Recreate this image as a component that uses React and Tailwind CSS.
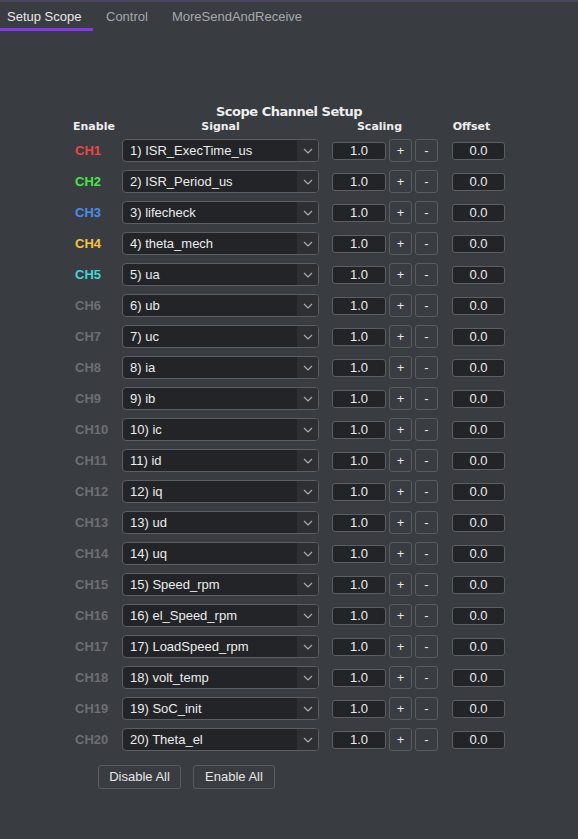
import React from 'react';

const channels = [
    { name: "CH1", color: "text-[#ec4646]", signal: "1) ISR_ExecTime_us" },
    { name: "CH2", color: "text-[#46e646]", signal: "2) ISR_Period_us" },
    { name: "CH3", color: "text-[#4a8cf2]", signal: "3) lifecheck" },
    { name: "CH4", color: "text-[#f3c540]", signal: "4) theta_mech" },
    { name: "CH5", color: "text-[#45d4d4]", signal: "5) ua" },
    { name: "CH6", signal: "6) ub" },
    { name: "CH7", signal: "7) uc" },
    { name: "CH8", signal: "8) ia" },
    { name: "CH9", signal: "9) ib" },
    { name: "CH10", signal: "10) ic" },
    { name: "CH11", signal: "11) id" },
    { name: "CH12", signal: "12) iq" },
    { name: "CH13", signal: "13) ud" },
    { name: "CH14", signal: "14) uq" },
    { name: "CH15", signal: "15) Speed_rpm" },
    { name: "CH16", signal: "16) el_Speed_rpm" },
    { name: "CH17", signal: "17) LoadSpeed_rpm" },
    { name: "CH18", signal: "18) volt_temp" },
    { name: "CH19", signal: "19) SoC_init" },
    { name: "CH20", signal: "20) Theta_el" },
];

const Chevron = () => (
    <svg width="10" height="6" viewBox="0 0 10 6" fill="none">
        <path d="M1 1l4 4 4-4" stroke="#a9abaf" strokeWidth="1.2" />
    </svg>
);

const SmallButton = ({ children }) => (
    <div className="w-[23px] h-[23px] rounded-[3px] border border-[#595c61] flex items-center justify-center text-[13px] text-[#e6e6e6]">
        {children}
    </div>
);

const ChannelRow = ({ ch }) => (
    <div className="flex items-center h-[31px]">
        <div className={`w-[54px] pl-[7px] font-bold text-[13px] ${ch.color || "text-[#6c6f74]"}`}>{ch.name}</div>
        <div className="w-[197px] h-[23px] rounded-[4px] border border-[#5b5e63] bg-[#222428] flex overflow-hidden">
            <div className="flex-1 pl-[7px] flex items-center text-[13px] text-[#ececec]">{ch.signal}</div>
            <div className="w-[21px] bg-[#2d2f33] flex items-center justify-center">
                <Chevron />
            </div>
        </div>
        <div className="ml-[13px] w-[54px] h-[18px] rounded-[3px] border border-[#5b5e63] bg-[#222428] flex items-center justify-center text-[13px] text-[#ececec]">1.0</div>
        <div className="ml-[3px]"><SmallButton>+</SmallButton></div>
        <div className="ml-[3px]"><SmallButton>-</SmallButton></div>
        <div className="ml-[14px] w-[53px] h-[18px] rounded-[3px] border border-[#5b5e63] bg-[#222428] flex items-center justify-center text-[13px] text-[#ececec]">0.0</div>
    </div>
);

const App = () => {
    return (
        <div className="w-[578px] h-[839px] bg-[#393c41] font-['Liberation_Sans',Arial,sans-serif] overflow-hidden">
            <div className="border-t-2 border-[#4b4660] flex h-[31px] text-[13px]">
                <div className="w-[93px] pl-[7px] pt-[5px] text-[#e8e8e8] border-b-[3px] border-[#8338ec]">Setup Scope</div>
                <div className="ml-[13px] pt-[5px] text-[#a6a9ae]">Control</div>
                <div className="ml-[24px] pt-[5px] text-[#a6a9ae]">MoreSendAndReceive</div>
            </div>

            <div className="pt-[73px] text-center font-['DejaVu_Sans',sans-serif] font-bold text-[13px] leading-[16px] tracking-[-0.5px] text-[#eeeeee]">
                Scope Channel Setup
            </div>

            <div className="ml-[68px]">
                <div className="flex h-[15px] items-center font-['DejaVu_Sans',sans-serif] font-bold text-[11px] text-[#eeeeee]">
                    <div className="w-[54px] pl-[5px]">Enable</div>
                    <div className="w-[197px] text-center">Signal</div>
                    <div className="w-[120px] pl-[1px] text-center">Scaling</div>
                    <div className="ml-[6px] w-[53px] text-center">Offset</div>
                </div>

                {channels.map((ch) => (
                    <ChannelRow key={ch.name} ch={ch} />
                ))}

                <div className="flex gap-[12px] ml-[30px] mt-[10px]">
                    <div className="w-[83px] h-[24px] rounded-[3px] border border-[#595c61] flex items-center justify-center text-[13px] text-[#e6e6e6]">Disable All</div>
                    <div className="w-[82px] h-[24px] rounded-[3px] border border-[#595c61] flex items-center justify-center text-[13px] text-[#e6e6e6]">Enable All</div>
                </div>
            </div>
        </div>
    );
};

export default App;
